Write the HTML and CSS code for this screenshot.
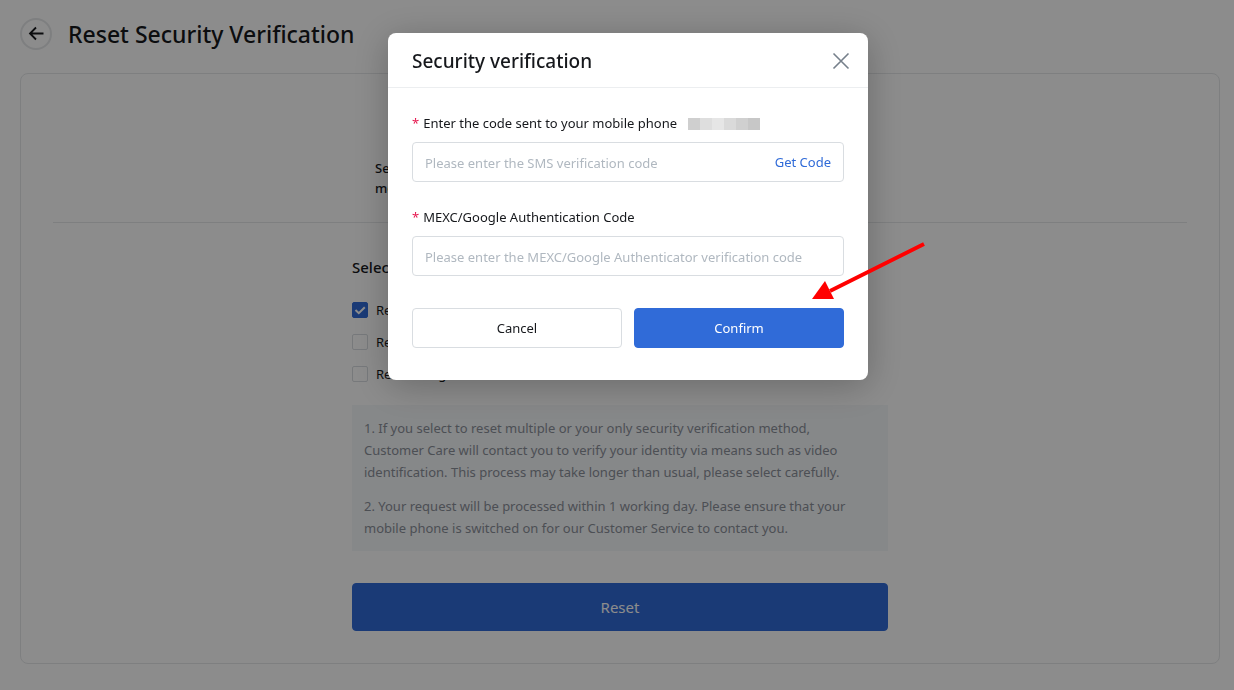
FILE: index.html
```html
<!DOCTYPE html>
<html lang="en">
<head>
    <meta charset="UTF-8">
    <meta name="viewport" content="width=device-width, initial-scale=1.0">
    <title>Reset Security Verification</title>
    <link rel="stylesheet" href="styles.css">
</head>
<body>
    <div class="page">
        <header class="page-head">
            <button type="button" class="back" aria-label="Back">
                <svg width="16" height="16" viewBox="0 0 16 16" fill="none" stroke="currentColor" stroke-width="1.8">
                    <path d="M15.5 7.5H2M8 1.5L2 7.5L8 13.5"/>
                </svg>
            </button>
            <h1>Reset Security Verification</h1>
        </header>

        <main class="card">
            <div class="steps">
                <p class="step">Select security verification method</p>
            </div>

            <form class="reset-form">
                <h2>Select the verification to reset</h2>
                <div class="options">
                    <label class="option"><input type="checkbox" checked> Reset Mobile</label>
                    <label class="option"><input type="checkbox"> Reset Email</label>
                    <label class="option"><input type="checkbox"> Reset Google Authenticator</label>
                </div>
                <div class="notice">
                    <p>1. If you select to reset multiple or your only security verification method, Customer Care will contact you to verify your identity via means such as video identification. This process may take longer than usual, please select carefully.</p>
                    <p>2. Your request will be processed within 1 working day. Please ensure that your mobile phone is switched on for our Customer Service to contact you.</p>
                </div>
                <button type="button" class="btn btn-primary btn-large">Reset</button>
            </form>
        </main>
    </div>

    <!-- modal -->
    <div class="mask">
        <div class="modal" role="dialog" aria-labelledby="modal-title">
            <div class="modal-head">
                <h2 id="modal-title">Security verification</h2>
                <button type="button" class="close" aria-label="Close">
                    <svg width="18" height="18" viewBox="0 0 18 18" fill="none" stroke="currentColor" stroke-width="1.6">
                        <path d="M1.5 1.5L16.5 16.5M16.5 1.5L1.5 16.5"/>
                    </svg>
                </button>
            </div>
            <form class="modal-body">
                <div class="field">
                    <label for="sms"><span class="required">*</span>Enter the code sent to your mobile phone <span class="masked"></span></label>
                    <div class="input-box">
                        <input type="text" id="sms" placeholder="Please enter the SMS verification code">
                        <button type="button" class="get-code">Get Code</button>
                    </div>
                </div>
                <div class="field">
                    <label for="auth"><span class="required">*</span>MEXC/Google Authentication Code</label>
                    <div class="input-box">
                        <input type="text" id="auth" placeholder="Please enter the MEXC/Google Authenticator verification code">
                    </div>
                </div>
                <div class="actions">
                    <button type="button" class="btn">Cancel</button>
                    <button type="button" class="btn btn-primary">Confirm</button>
                </div>
            </form>
            <svg class="arrow" width="114" height="58" viewBox="0 0 114 58">
                <path d="M112 2L18 49" stroke="#f00" stroke-width="4"/>
                <path d="M0 57L13 39L22 57Z" fill="#f00"/>
            </svg>
        </div>
    </div>
</body>
</html>
```
FILE: styles.css
```css
* {
    box-sizing: border-box;
}

body {
    margin: 0;
    color: #16181c;
    background: #fff;
    font-family: "Noto Sans", "Open Sans", sans-serif;
    font-size: 13px;
    line-height: 22px;
}

h1, h2, p {
    margin: 0;
}

button, input {
    font: inherit;
    color: inherit;
}

button {
    padding: 0;
    border: 0;
    background: none;
    cursor: pointer;
}

/* page */
.page {
    padding: 16px 14px 26px 20px;
}

.page-head {
    display: flex;
    align-items: center;
    gap: 16px;
    margin-bottom: 21px;
}

.page-head h1 {
    font-size: 23px;
    font-weight: 500;
    line-height: 36px;
}

.back {
    display: flex;
    align-items: center;
    justify-content: center;
    width: 32px;
    height: 32px;
    border: 2px solid #e6e8ea;
    border-radius: 50%;
}

.card {
    padding: 84px 32px 32px;
    border: 1px solid #e6e8ea;
    border-radius: 8px;
}

.steps {
    padding-bottom: 24px;
    border-bottom: 1px solid #e6e8ea;
}

.step {
    width: 490px;
    max-width: 100%;
    margin: 0 auto;
    padding-right: 290px;
    font-weight: 500;
    line-height: 20px;
}

.reset-form {
    max-width: 536px;
    margin: 0 auto;
    padding-top: 32px;
}

.reset-form h2 {
    margin-bottom: 20px;
    font-size: 15px;
    font-weight: 500;
    line-height: 24px;
}

.options {
    display: flex;
    flex-direction: column;
    gap: 10px;
    margin-bottom: 20px;
}

.option {
    display: flex;
    align-items: center;
    gap: 8px;
}

.option input {
    appearance: none;
    width: 16px;
    height: 16px;
    margin: 0;
    border: 1px solid #d9dde1;
    border-radius: 2px;
}

.option input:checked {
    border-color: #306bd8;
    background: #306bd8 url("data:image/svg+xml,%3Csvg xmlns='http://www.w3.org/2000/svg' viewBox='0 0 14 14'%3E%3Cpath d='M2.5 7L5.8 10.2L11.8 4.2' fill='none' stroke='white' stroke-width='2'/%3E%3C/svg%3E") center / 14px no-repeat;
}

.notice {
    display: flex;
    flex-direction: column;
    gap: 12px;
    margin-bottom: 32px;
    padding: 12px 32px 12px 12px;
    color: #8a9099;
    background: #f5f7fa;
}

/* buttons */
.btn {
    flex: 1;
    height: 40px;
    border: 1px solid #d9dde1;
    border-radius: 4px;
}

.btn-primary {
    border-color: #306bd8;
    color: #fff;
    background: #306bd8;
}

.btn-large {
    width: 100%;
    height: 48px;
    font-size: 15px;
}

/* modal */
.mask {
    position: fixed;
    inset: 0;
    display: flex;
    align-items: flex-start;
    justify-content: center;
    padding: 33px 0 0 22px;
    background: rgba(0, 0, 0, .45);
}

.modal {
    position: relative;
    width: 480px;
    border-radius: 8px;
    background: #fff;
    box-shadow: 0 6px 36px rgba(0, 0, 0, .25);
}

.modal-head {
    display: flex;
    align-items: center;
    justify-content: space-between;
    padding: 14px 18px 12px 24px;
    border-bottom: 1px solid #eceef0;
}

.modal-head h2 {
    font-size: 19px;
    font-weight: 500;
    line-height: 28px;
}

.close {
    display: flex;
    color: #76808b;
}

.modal-body {
    padding: 24px 24px 32px;
}

.field {
    display: flex;
    flex-direction: column;
    gap: 8px;
    margin-bottom: 24px;
}

.required {
    margin-right: 4px;
    color: #e6184f;
}

/* blurred out phone number */
.masked {
    display: inline-block;
    width: 72px;
    height: 12px;
    margin-left: 8px;
    vertical-align: -2px;
    background: linear-gradient(90deg, #cfcfcf 12px, #dedede 12px 24px, #e6e6e6 24px 36px, #dadada 36px 48px, #d0d0d0 48px 60px, #c7c7c7 60px);
}

.input-box {
    display: flex;
    align-items: center;
    height: 40px;
    padding: 0 12px;
    border: 1px solid #d9dde1;
    border-radius: 4px;
}

.input-box input {
    flex: 1;
    min-width: 0;
    padding: 2px 0 0;
    border: 0;
    outline: 0;
    background: none;
}

.input-box input::placeholder {
    color: #b0b8c0;
}

.get-code {
    color: #306bd8;
}

.actions {
    display: flex;
    gap: 12px;
    margin-top: 32px;
}

/* pointer to the confirm button */
.arrow {
    position: absolute;
    top: 209px;
    left: 424px;
}
```
